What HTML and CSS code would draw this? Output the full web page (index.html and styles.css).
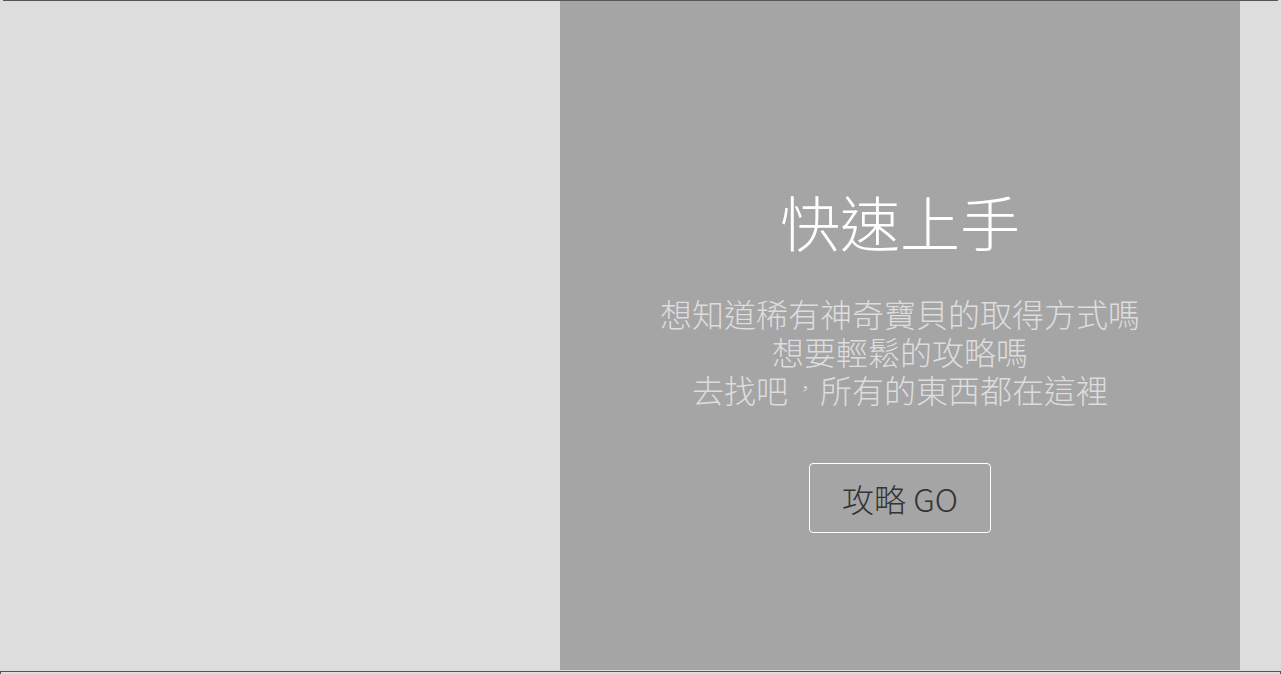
FILE: index.html
```html
<!DOCTYPE html>
<html lang="zh-TW">
<head>
<meta charset="utf-8">
<title>快速上手</title>
<link rel="stylesheet" href="styles.css">
</head>
<body>
<div class="prev-edge"></div>
<section class="hero">
  <div class="hero-left"></div>
  <div class="hero-panel">
    <h1 class="hero-title">快速上手</h1>
    <p class="hero-text">想知道稀有神奇寶貝的取得方式嗎<br>想要輕鬆的攻略嗎<br>去找吧<span class="punct">，</span>所有的東西都在這裡</p>
    <a class="hero-btn" href="#">攻略 GO</a>
  </div>
  <div class="hero-right"></div>
</section>
<div class="next-box"></div>
</body>
</html>
```
FILE: styles.css
```css
html, body {
  margin: 0;
  padding: 0;
}
body {
  background: #dddddd;
  font-family: "Noto Sans CJK TC", "Noto Sans", sans-serif;
  font-weight: 300;
  overflow: hidden;
}
.prev-edge {
  height: 1px;
  margin: 0 3px;
  background: #555555;
}
.hero {
  display: flex;
  height: 669px;
}
.hero-left {
  width: 560px;
}
.hero-right {
  flex: 1;
}
.hero-panel {
  width: 680px;
  background: #a5a5a5;
  display: flex;
  flex-direction: column;
  align-items: center;
  padding-top: 184px;
  box-sizing: border-box;
}
.hero-title {
  margin: 0;
  font-size: 60px;
  line-height: 72px;
  font-weight: 300;
  color: #ffffff;
}
.hero-text {
  margin: 37px 0 0;
  font-size: 32px;
  line-height: 38px;
  color: #dddddd;
  text-align: center;
}
.punct {
  display: inline-block;
  transform: translate(4px, -6px) scale(0.7, 0.55);
  transform-origin: 20% 75%;
}
.hero-btn {
  margin-top: 55px;
  width: 182px;
  height: 70px;
  box-sizing: border-box;
  border: 1px solid #ffffff;
  border-radius: 4px;
  display: flex;
  align-items: center;
  justify-content: center;
  font-size: 32px;
  color: #333333;
  text-decoration: none;
}
.next-box {
  height: 10px;
  margin-top: 1px;
  border: 1px solid #555555;
  border-bottom: none;
}
```
